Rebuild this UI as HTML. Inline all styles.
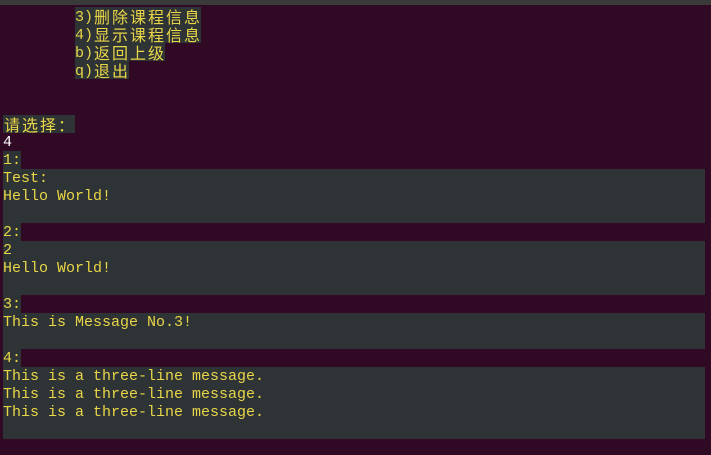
<!DOCTYPE html>
<html><head><meta charset="utf-8"><style>
body{margin:0;width:711px;height:455px;background:#300a24;overflow:hidden;position:relative;font-family:"Liberation Mono","Noto Sans CJK SC",monospace;font-size:15px;color:#e9d548}
.top{position:absolute;left:0;top:0;width:711px;height:5px;background:#3a3a3a}
.r{position:absolute;height:17px;padding-top:1px;line-height:18px;white-space:pre;background:#2e3436}
.f{left:3px;width:702px}
.c{display:inline-block;width:18px;height:18px;text-align:center;font-size:16px;font-family:"Noto Sans CJK SC",sans-serif;vertical-align:top;line-height:18px;position:relative;top:-1px}
.a{display:inline-block;width:9px;height:18px;vertical-align:top;line-height:18px;position:relative;top:1px}
</style></head><body>
<div class="top"></div>
<div class="r" style="left:75px;top:7px"><span class="a">3</span><span class="a">)</span><span class="c">删</span><span class="c">除</span><span class="c">课</span><span class="c">程</span><span class="c">信</span><span class="c">息</span></div>
<div class="r" style="left:75px;top:25px"><span class="a">4</span><span class="a">)</span><span class="c">显</span><span class="c">示</span><span class="c">课</span><span class="c">程</span><span class="c">信</span><span class="c">息</span></div>
<div class="r" style="left:75px;top:43px"><span class="a">b</span><span class="a">)</span><span class="c">返</span><span class="c">回</span><span class="c">上</span><span class="c">级</span></div>
<div class="r" style="left:75px;top:61px"><span class="a">q</span><span class="a">)</span><span class="c">退</span><span class="c">出</span></div>
<div class="r" style="left:3px;top:115px"><span class="c">请</span><span class="c">选</span><span class="c">择</span><span class="c">：</span></div>
<div class="r" style="left:3px;top:133px;background:none;color:#fff">4</div>
<div class="r" style="left:3px;top:151px">1:</div>
<div class="r f" style="top:169px">Test:</div>
<div class="r f" style="top:187px">Hello World!</div>
<div class="r f" style="top:205px"></div>
<div class="r" style="left:3px;top:223px">2:</div>
<div class="r f" style="top:241px">2</div>
<div class="r f" style="top:259px">Hello World!</div>
<div class="r f" style="top:277px"></div>
<div class="r" style="left:3px;top:295px">3:</div>
<div class="r f" style="top:313px">This is Message No.3!</div>
<div class="r f" style="top:331px"></div>
<div class="r" style="left:3px;top:349px">4:</div>
<div class="r f" style="top:367px">This is a three-line message.</div>
<div class="r f" style="top:385px">This is a three-line message.</div>
<div class="r f" style="top:403px">This is a three-line message.</div>
<div class="r f" style="top:421px"></div>
</body></html>
